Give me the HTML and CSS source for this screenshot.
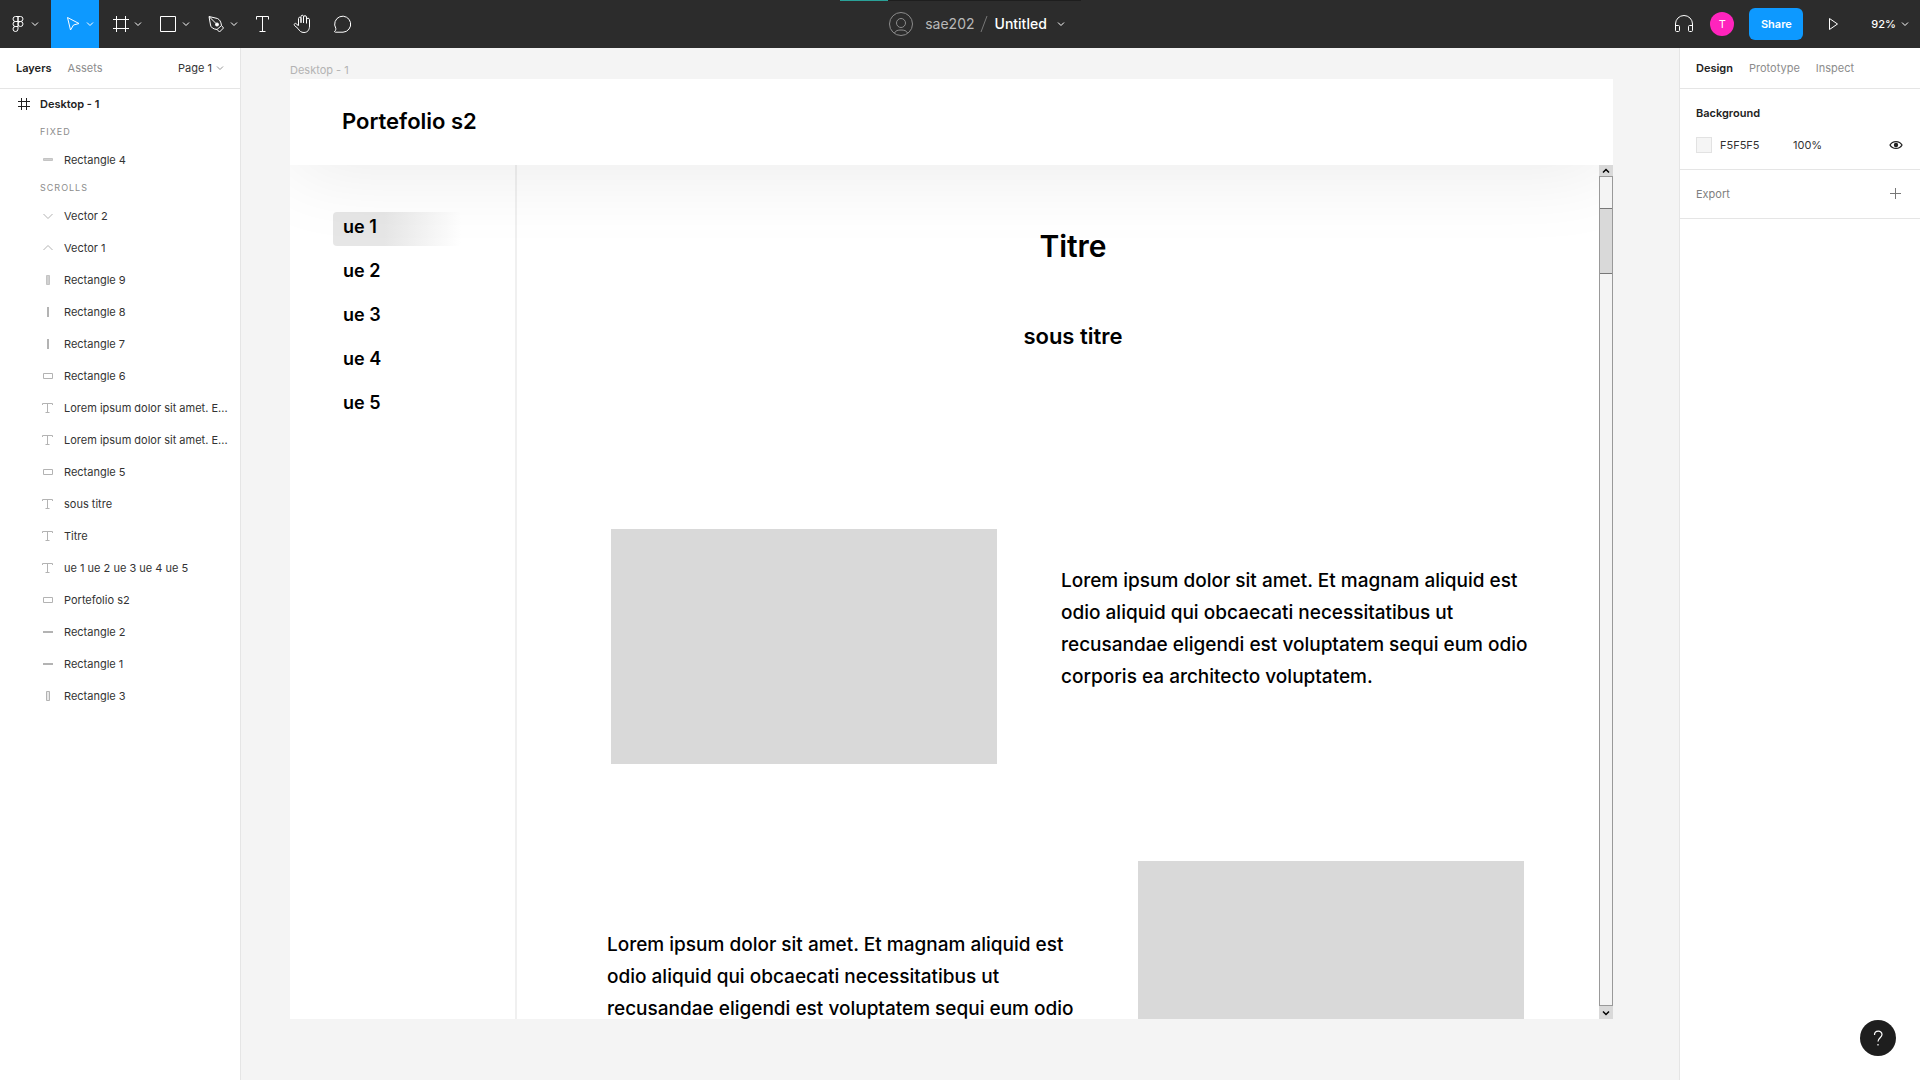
FILE: index.html
```html
<!DOCTYPE html>
<html lang="en">
<head>
<meta charset="utf-8">
<title>Untitled</title>
<link rel="stylesheet" href="styles.css">
</head>
<body>
<svg class="defs" aria-hidden="true">
  <symbol id="chev" viewBox="0 0 8 8"><path d="M1 2.5l3 3 3-3" fill="none" stroke="currentColor"/></symbol>
  <symbol id="l-frame" viewBox="0 0 12 12"><path d="M3.500 0v12M8.500 0v12M0 3.500h12M0 8.500h12" fill="none" stroke="currentColor"/></symbol>
  <symbol id="l-text" viewBox="0 0 12 12"><path d="M.5 3V1.500h10V3M5.500 1.500v9M3.500 10.500h4" fill="none" stroke="currentColor"/></symbol>
  <symbol id="l-rect" viewBox="0 0 12 12"><path d="M1.500 3.500h9v5h-9z" fill="none" stroke="currentColor"/></symbol>
  <symbol id="l-tall" viewBox="0 0 12 12"><path d="M4.500 1.500h3v9h-3z" fill="#e8e8e8" stroke="currentColor"/></symbol>
  <symbol id="l-tallfill" viewBox="0 0 12 12"><path d="M4.500 1.500h3v9h-3z" fill="#d0d0d0" stroke="#c4c4c4"/></symbol>
  <symbol id="l-v" viewBox="0 0 12 12"><path d="M5 1h2v10H5z" fill="currentColor"/></symbol>
  <symbol id="l-h" viewBox="0 0 12 12"><path d="M1 5h10v2H1z" fill="currentColor"/></symbol>
  <symbol id="l-hfill" viewBox="0 0 12 12"><path d="M1.500 4.500h9v2h-9z" fill="#d0d0d0" stroke="#c4c4c4"/></symbol>
  <symbol id="l-down" viewBox="0 0 12 12"><path d="M1.500 4l4.500 4.500L10.500 4" fill="none" stroke="currentColor"/></symbol>
  <symbol id="l-up" viewBox="0 0 12 12"><path d="M1.500 8L6 3.500 10.500 8" fill="none" stroke="currentColor"/></symbol>
</svg>

<header class="topbar">
  <div class="progress"><span class="progress-done"></span></div>
  <div class="tools">
    <button class="tool tool-menu" aria-label="Main menu">
      <svg class="icon" viewBox="0 0 24 24"><path d="M12 4.500H9.500a2.500 2.500 0 0 0 0 5H12zM12 4.500h2.500a2.500 2.500 0 0 1 0 5H12zM12 9.500H9.500a2.500 2.500 0 0 0 0 5H12zM12 14.500H9.500a2.500 2.500 0 1 0 2.500 2.500z"/><circle cx="14.500" cy="12" r="2.500"/></svg>
      <svg class="chev"><use href="#chev"/></svg>
    </button>
    <button class="tool tool-active" aria-label="Move">
      <svg class="icon" viewBox="0 0 24 24"><path d="M6.500 5.500l11.500 6-5.500 1.500-3 5z"/></svg>
      <svg class="chev"><use href="#chev"/></svg>
    </button>
    <button class="tool" aria-label="Frame">
      <svg class="icon" viewBox="0 0 24 24"><path d="M7.500 4v16M16.500 4v16M4 7.500h16M4 16.500h16"/></svg>
      <svg class="chev"><use href="#chev"/></svg>
    </button>
    <button class="tool" aria-label="Rectangle">
      <svg class="icon" viewBox="0 0 24 24"><path d="M3.500 4.500h15v15h-15z"/></svg>
      <svg class="chev"><use href="#chev"/></svg>
    </button>
    <button class="tool" aria-label="Pen">
      <svg class="icon" viewBox="0 0 24 24"><path d="M4 4.500l8.500 2c2 1 3.500 3 4 7l2 2.500-4 4-2.500-2.500c-4-.5-6-2-6.500-4.500zM12 17.500l4.500-4M4.500 5l6.500 6.500"/><circle cx="12" cy="12.500" r="1.500" fill="#fff"/></svg>
      <svg class="chev"><use href="#chev"/></svg>
    </button>
    <button class="tool tool-single" aria-label="Text">
      <svg class="icon" viewBox="0 0 24 24"><path d="M5.500 7.500v-3h12v3M11.500 4.500v15M8.500 19.500h6"/></svg>
    </button>
    <button class="tool tool-single" aria-label="Hand">
      <svg class="icon" viewBox="0 0 24 24"><path d="M7.500 13.500V6.500c0-1.700 2.500-1.700 2.500 0V11M10 10.500V4.500c0-1.700 2.500-1.700 2.500 0V11M12.500 5c0-1.700 3-1.700 3 0v6.500M15.500 7.500c0-1.700 3-1.700 3 0V14c0 4-2 6.500-5.500 6.500-3 0-4.500-1.500-6-4L3.500 13.500c-1-1.500.8-3 2.200-1.500l1.800 2"/></svg>
    </button>
    <button class="tool tool-single" aria-label="Comment">
      <svg class="icon" viewBox="0 0 24 24"><path d="M3.500 19.500c1-.8 1.500-1.800 1.300-3.200A8 8 0 1 1 12 20.200H4.500c-.7 0-1-.3-1-.7z"/></svg>
    </button>
  </div>
  <div class="doc">
    <svg class="icon doc-user" viewBox="0 0 24 24"><circle cx="12" cy="12" r="11.500"/><circle cx="12" cy="11" r="4.500"/><path d="M5.500 21c1-2.500 3.500-3 6.500-3s5.500.5 6.500 3"/></svg>
    <a class="doc-team" href="#">sae202</a>
    <svg class="doc-slash" viewBox="0 0 8 18"><path d="M1 17L7 1" fill="none" stroke="currentColor"/></svg>
    <button class="doc-name">Untitled <svg class="chev"><use href="#chev"/></svg></button>
  </div>
  <div class="actions">
    <button class="plain" aria-label="Audio">
      <svg class="icon" viewBox="0 0 24 24"><path d="M3.500 18v-6a8.500 8.500 0 0 1 17 0v6M3.500 13.500h3c.6 0 1 .4 1 1v4c0 .6-.4 1-1 1h-2c-.6 0-1-.4-1-1zM20.500 13.500h-3c-.6 0-1 .4-1 1v4c0 .6.4 1 1 1h2c.6 0 1-.4 1-1z"/></svg>
    </button>
    <button class="avatar">T</button>
    <button class="share">Share</button>
    <button class="plain" aria-label="Present">
      <svg class="icon" viewBox="0 0 24 24"><path d="M8.500 6.500l8 5.500-8 5.500z"/></svg>
    </button>
    <button class="zoom">92% <svg class="chev"><use href="#chev"/></svg></button>
  </div>
</header>

<div class="workspace">
  <aside class="panel panel-left">
    <div class="tabs">
      <button class="tab tab-on">Layers</button>
      <button class="tab">Assets</button>
      <button class="page-menu">Page 1 <svg class="chev"><use href="#chev"/></svg></button>
    </div>
    <ul class="layers">
      <li class="layer layer-top"><svg><use href="#l-frame"/></svg><span>Desktop - 1</span></li>
      <li class="group">Fixed</li>
      <li class="layer"><svg><use href="#l-hfill"/></svg><span>Rectangle 4</span></li>
      <li class="group">Scrolls</li>
      <li class="layer"><svg><use href="#l-down"/></svg><span>Vector 2</span></li>
      <li class="layer"><svg><use href="#l-up"/></svg><span>Vector 1</span></li>
      <li class="layer"><svg><use href="#l-tallfill"/></svg><span>Rectangle 9</span></li>
      <li class="layer"><svg><use href="#l-v"/></svg><span>Rectangle 8</span></li>
      <li class="layer"><svg><use href="#l-v"/></svg><span>Rectangle 7</span></li>
      <li class="layer"><svg><use href="#l-rect"/></svg><span>Rectangle 6</span></li>
      <li class="layer"><svg><use href="#l-text"/></svg><span>Lorem ipsum dolor sit amet. E...</span></li>
      <li class="layer"><svg><use href="#l-text"/></svg><span>Lorem ipsum dolor sit amet. E...</span></li>
      <li class="layer"><svg><use href="#l-rect"/></svg><span>Rectangle 5</span></li>
      <li class="layer"><svg><use href="#l-text"/></svg><span>sous titre</span></li>
      <li class="layer"><svg><use href="#l-text"/></svg><span>Titre</span></li>
      <li class="layer"><svg><use href="#l-text"/></svg><span>ue 1 ue 2 ue 3 ue 4 ue 5</span></li>
      <li class="layer"><svg><use href="#l-rect"/></svg><span>Portefolio s2</span></li>
      <li class="layer"><svg><use href="#l-h"/></svg><span>Rectangle 2</span></li>
      <li class="layer"><svg><use href="#l-h"/></svg><span>Rectangle 1</span></li>
      <li class="layer"><svg><use href="#l-tall"/></svg><span>Rectangle 3</span></li>
    </ul>
  </aside>

  <main class="canvas">
    <div class="frame-name">Desktop - 1</div>
    <div class="frame">
      <div class="site-head">Portefolio s2</div>
      <div class="site-body">
        <nav class="site-nav">
          <a class="current" href="#">ue 1</a>
          <a href="#">ue 2</a>
          <a href="#">ue 3</a>
          <a href="#">ue 4</a>
          <a href="#">ue 5</a>
        </nav>
        <section class="site-main">
          <h1>Titre</h1>
          <h2>sous titre</h2>
          <div class="row row-first">
            <div class="picture"></div>
            <p>Lorem ipsum dolor sit amet. Et magnam aliquid est odio aliquid qui obcaecati necessitatibus ut recusandae eligendi est voluptatem sequi eum odio corporis ea architecto voluptatem.</p>
          </div>
          <div class="row row-second">
            <p>Lorem ipsum dolor sit amet. Et magnam aliquid est odio aliquid qui obcaecati necessitatibus ut recusandae eligendi est voluptatem sequi eum odio</p>
            <div class="picture"></div>
          </div>
        </section>
        <div class="scroll">
          <div class="scroll-end scroll-up"><svg class="chev"><use href="#chev"/></svg></div>
          <div class="scroll-track"><div class="scroll-thumb"></div></div>
          <div class="scroll-end"><svg class="chev"><use href="#chev"/></svg></div>
        </div>
      </div>
    </div>
  </main>

  <aside class="panel panel-right">
    <div class="tabs">
      <button class="tab tab-on">Design</button>
      <button class="tab">Prototype</button>
      <button class="tab">Inspect</button>
    </div>
    <section class="props">
      <h3>Background</h3>
      <div class="prop">
        <span class="swatch"></span>
        <input class="hex" aria-label="Colour" value="F5F5F5">
        <input class="opacity" aria-label="Opacity" value="100%">
        <button class="prop-btn" aria-label="Visible">
          <svg viewBox="0 0 16 16"><path d="M2 8c2.500-4.600 9.500-4.600 12 0-2.500 4.600-9.500 4.600-12 0z" fill="none" stroke="#222" stroke-width="1.300"/><circle cx="8" cy="8" r="2.200" fill="#222"/></svg>
        </button>
      </div>
    </section>
    <section class="props">
      <div class="prop prop-quiet">Export
        <button class="prop-btn" aria-label="Add export"><svg viewBox="0 0 16 16"><path d="M7.500 2v11M2 7.500h11" fill="none" stroke="#777"/></svg></button>
      </div>
    </section>
  </aside>
</div>
<button class="help" aria-label="Help"><svg viewBox="0 0 36 36"><path d="M14.500 15c0-5 7.500-5 7.500-.5 0 3-4 3.500-4 7M18 24v1.500" fill="none" stroke="#fff" stroke-width="1.200"/></svg></button>
</body>
</html>
```
FILE: styles.css
```css
* { box-sizing: border-box; }

body {
  margin: 0;
  height: 100vh;
  display: flex;
  flex-direction: column;
  overflow: hidden;
  font: 11px/16px Inter, "Liberation Sans", sans-serif;
  color: #333;
  background: #f4f4f4;
}

button, input {
  font: inherit;
  color: inherit;
  border: 0;
  padding: 0;
  background: none;
}

a { color: inherit; text-decoration: none; }
svg { display: block; flex: none; }
.defs { position: absolute; width: 0; height: 0; }
.chev { width: 8px; height: 8px; }

/* Top bar */
.topbar {
  position: relative;
  flex: none;
  height: 48px;
  display: grid;
  grid-template-columns: 1fr auto 1fr;
  background: #2c2c2c;
  color: #fff;
}

.progress {
  position: absolute;
  top: 0;
  left: 840px;
  width: 241px;
  height: 1px;
  background: #1e1e1e;
}
.progress-done { display: block; width: 48px; height: 1px; background: #2aa198; }

.icon { width: 24px; height: 24px; fill: none; stroke: currentColor; }

.tools, .doc, .actions { display: flex; align-items: center; }
.tool {
  width: 48px;
  height: 48px;
  padding-left: 10px;
  display: flex;
  align-items: center;
  gap: 1px;
}
.tool-menu { width: 51px; padding-left: 6px; }
.tool-active { background: #0d99ff; }
.tool-single { width: 40px; padding-left: 8px; }

.doc { padding-left: 34px; font-size: 14px; }
.doc-user { color: #8c8c8c; }
.doc-team { margin-left: 12px; color: #b8b8b8; }
.doc-slash { width: 8px; height: 18px; margin: 0 7px 0 5px; color: #777; }
.doc-name { display: flex; align-items: center; gap: 10px; font-weight: 500; }

.actions { justify-content: flex-end; padding-right: 11px; }
.plain { display: flex; }
.avatar {
  width: 24px;
  height: 24px;
  margin: 0 15px 0 14px;
  border-radius: 50%;
  background: #ff24bd;
}
.share {
  width: 54px;
  height: 32px;
  margin-right: 18px;
  border-radius: 6px;
  background: #0d99ff;
  font-weight: 600;
}
.zoom {
  display: flex;
  align-items: center;
  gap: 5px;
  margin-left: 26px;
  font-weight: 500;
}

/* Side panels */
.workspace { flex: 1; min-height: 0; display: flex; }
.panel { flex: none; width: 241px; background: #fff; }
.panel-left { border-right: 1px solid #e5e5e5; }
.panel-right { border-left: 1px solid #e5e5e5; }

.tabs {
  height: 40px;
  padding: 0 16px;
  display: flex;
  align-items: center;
  gap: 16px;
  box-shadow: 0 1px #e5e5e5;
}
.tab { color: #8c8c8c; }
.tab-on { color: #222; font-weight: 600; }
.page-menu { display: flex; align-items: center; gap: 4px; margin-left: auto; }
.page-menu .chev { color: #999; }

.layers { margin: 0; padding: 0; list-style: none; }
.layer {
  height: 32px;
  padding: 0 8px 0 42px;
  display: flex;
  align-items: center;
  gap: 10px;
  white-space: nowrap;
}
.layer svg { width: 12px; height: 12px; color: #b3b3b3; }
.layer-top { padding-left: 18px; font-weight: 600; color: #222; }
.layer-top svg { color: #222; }
.group {
  padding-left: 40px;
  font-size: 9px;
  line-height: 24px;
  letter-spacing: 1px;
  text-transform: uppercase;
  color: #8c8c8c;
}

.props { padding: 8px 16px; border-bottom: 1px solid #e5e5e5; }
.tabs + .props { padding-top: 9px; }
.props h3 { margin: 0; font-size: 11px; line-height: 32px; font-weight: 600; color: #222; }
.prop { height: 32px; display: flex; align-items: center; }
.prop-quiet { color: #808080; }
.swatch { width: 16px; height: 16px; border: 1px solid #e2e2e2; background: #f5f5f5; }
.hex { width: 65px; margin: 0 8px; }
.opacity { width: 40px; }
.prop-btn { margin-left: auto; }
.prop-btn svg { width: 16px; height: 16px; }

/* Canvas */
.canvas {
  flex: 1;
  min-width: 0;
  padding: 14px 66px 61px 49px;
  display: flex;
  flex-direction: column;
}
.frame-name { height: 17px; color: #b3b3b3; }
.frame {
  flex: 1;
  min-height: 0;
  display: flex;
  flex-direction: column;
  overflow: hidden;
  background: #fff;
  color: #000;
  font-size: 18px;
  font-weight: 600;
}
.site-head {
  position: relative;
  flex: none;
  padding: 25px 52px 27px;
  background: #fff;
  box-shadow: 0 4px 84px rgba(0, 0, 0, 0.09);
  font-size: 22px;
  line-height: 34px;
}
.site-body { flex: 1; min-height: 0; display: flex; }

.site-nav {
  flex: none;
  width: 227px;
  padding: 47px 54px 0 43px;
  border-right: 2px solid #f0f0f0;
}
.site-nav a {
  display: block;
  height: 34px;
  margin-bottom: 10px;
  padding-left: 10px;
  line-height: 30px;
}
.site-nav .current {
  border-radius: 4px;
  background: linear-gradient(90deg, #e6e6e6 40%, transparent);
}

.site-main { flex: 1; min-width: 0; padding: 0 60px 0 90px; }
.site-main h1 {
  margin: 61px 0 53px;
  font-size: 30px;
  line-height: 40px;
  font-weight: 600;
  text-align: center;
}
.site-main h2 {
  margin: 0 0 176px;
  font-size: 22px;
  line-height: 34px;
  font-weight: 600;
  text-align: center;
}
.row { display: flex; }
.row p { flex: 0 1 478px; margin: 0; font-size: 19px; font-weight: 500; line-height: 32px; }
.row-first { padding-left: 4px; gap: 64px; margin-bottom: 97px; }
.row-first p { padding-top: 36px; }
.row-second { padding-right: 15px; justify-content: space-between; }
.row-second p { padding-top: 68px; }
.picture { flex: 0 1 386px; height: 235px; background: #d9d9d9; }

.scroll { position: relative; flex: none; width: 14px; display: flex; flex-direction: column; }
.scroll-end {
  height: 13px;
  display: grid;
  place-items: center;
  background: #d9d9d9;
}
.scroll-end .chev { stroke-width: 1.5; }
.scroll-up { height: 11px; }
.scroll-up .chev { transform: rotate(180deg); }
.scroll-track { flex: 1; padding-top: 31px; border: 1px solid #999; background: #f4f4f4; }
.scroll-thumb { height: 66px; border: solid #777; border-width: 1px 0; background: #d9d9d9; }

.help {
  position: fixed;
  right: 24px;
  bottom: 24px;
  width: 36px;
  height: 36px;
  border-radius: 50%;
  background: #1e1e1e;
}
```
